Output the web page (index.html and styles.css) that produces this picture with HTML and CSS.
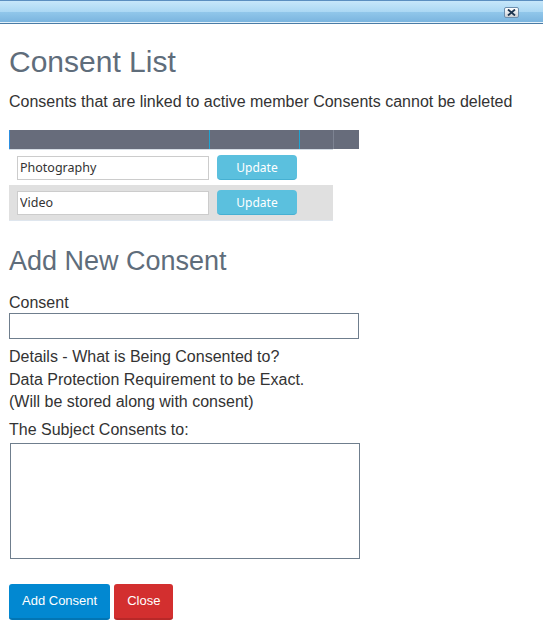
FILE: index.html
```html
<!DOCTYPE html>
<html>
<head>
<meta charset="utf-8">
<title>Consent List</title>
<link rel="stylesheet" href="styles.css">
</head>
<body>
<div class="titlebar">
  <button class="tb-close" type="button" aria-label="Close">
    <svg width="9" height="7" viewBox="0 0 9 7"><path d="M1 0.5 L8 6.5 M8 0.5 L1 6.5" stroke="#1d3550" stroke-width="1.8" fill="none"/></svg>
  </button>
</div>
<div class="content">
  <h2 class="h-main">Consent List</h2>
  <p class="note">Consents that are linked to active member Consents cannot be deleted</p>

  <div class="grid">
    <div class="grid-head">
      <div class="hc hc1"></div>
      <div class="hc hc2"></div>
      <div class="hc hc3"></div>
      <div class="hc hc4"></div>
    </div>
    <div class="grid-row first">
      <div class="gc gc1"><input class="row-input" type="text" value="Photography"></div>
      <div class="gc gc2"><button class="btn-update" type="button">Update</button></div>
      <div class="gc gc3"></div>
    </div>
    <div class="grid-row alt">
      <div class="gc gc1"><input class="row-input" type="text" value="Video"></div>
      <div class="gc gc2"><button class="btn-update" type="button">Update</button></div>
      <div class="gc gc3"></div>
    </div>
  </div>

  <h3 class="h-sub">Add New Consent</h3>
  <label class="lbl">Consent</label>
  <input class="field" type="text">
  <div class="details">Details - What is Being Consented to?<br>Data Protection Requirement to be Exact.<br>(Will be stored along with consent)</div>
  <label class="lbl lbl2">The Subject Consents to:</label>
  <textarea class="area"></textarea>
  <div class="actions">
    <button class="btn btn-primary" type="button">Add Consent</button>
    <button class="btn btn-danger" type="button">Close</button>
  </div>
</div>
</body>
</html>
```
FILE: styles.css
```css
html, body {
  margin: 0;
  padding: 0;
  background: #fff;
}
body {
  font-family: "Liberation Sans", Arial, sans-serif;
  color: #333;
  width: 543px;
}
.titlebar {
  height: 21px;
  border-top: 1px solid #5b8fc0;
  border-bottom: 1px solid #4a7ca6;
  box-shadow: inset 0 -1px 0 #e4f2fb;
  background: linear-gradient(#c6e7fa 0%, #acd8f4 48%, #90c6ea 52%, #79b3de 100%);
  display: flex;
  justify-content: flex-end;
  align-items: flex-start;
  padding: 0 24px 1px 0;
}
.tb-close {
  margin-top: 6px;
  width: 15px;
  height: 11px;
  padding: 0;
  border: 1px solid #6d8fae;
  border-radius: 2px;
  background: linear-gradient(#ffffff, #e4e8ec 50%, #c9ced4);
  display: flex;
  align-items: center;
  justify-content: center;
}
.content {
  padding: 0 9px;
}
.h-main {
  font-size: 30px;
  font-weight: normal;
  line-height: 33px;
  color: #5f6d7b;
  margin: 21px 0 12px;
}
.note {
  font-size: 16px;
  line-height: 23px;
  margin: 0 0 17px;
}
.grid {
  width: 350px;
}
.grid-head {
  display: grid;
  grid-template-columns: 200px 90px 34px 26px;
  width: 350px;
  height: 19px;
  background: #676c7b;
}
.hc { height: 19px; }
.hc1 { border-left: 1px solid #2c8ee0; }
.hc2 { border-left: 1px solid #1fa4d2; }
.hc3 { border-left: 1px solid #1fa4d2; }
.hc4 { border-left: 1px solid #7d8392; }
.grid-row {
  display: grid;
  grid-template-columns: 200px 90px 34px;
  width: 324px;
  height: 35px;
  align-items: center;
}
.grid-row.first {
  border-top: 1px solid #d5dce4;
}
.grid-row.alt {
  background: #e0e0e0;
  border-bottom: 1px solid #dfe6ee;
}
.gc1 { padding-left: 8px; }
.gc2 { padding-left: 8px; }
.row-input {
  box-sizing: border-box;
  width: 192px;
  height: 24px;
  border: 1px solid #cccccc;
  background: #fff;
  font-family: "Noto Sans", sans-serif;
  font-size: 12.5px;
  color: #333;
  padding: 0 2px;
  margin: 0;
  display: block;
}
.btn-update {
  box-sizing: border-box;
  width: 80px;
  height: 25px;
  border: 0;
  border-bottom: 1px solid #46b0d2;
  border-radius: 4px;
  background: #5bc0de;
  color: #fff;
  font-family: "Noto Sans", sans-serif;
  font-size: 12px;
  padding: 0;
  display: block;
}
.h-sub {
  font-size: 27px;
  font-weight: normal;
  line-height: 33px;
  color: #5f6d7b;
  margin: 24px 0 15px;
}
.lbl {
  display: block;
  font-size: 16px;
  line-height: 20px;
}
.field {
  box-sizing: border-box;
  display: block;
  width: 350px;
  height: 26px;
  margin: 0;
  border: 1px solid #6f7e8d;
  background: #fff;
}
.details {
  font-size: 16px;
  line-height: 22.5px;
  margin-top: 7px;
}
.lbl2 {
  margin-top: 5px;
  line-height: 22px;
  margin-bottom: 2px;
}
.area {
  box-sizing: border-box;
  display: block;
  width: 350px;
  height: 116px;
  margin: 0 0 0 1px;
  border: 1px solid #6f7e8d;
  resize: none;
  background: #fff;
}
.actions {
  margin-top: 25px;
  display: flex;
  gap: 4px;
}
.btn {
  box-sizing: border-box;
  height: 36px;
  padding: 0 13px;
  border: 0;
  border-radius: 3px;
  color: #fff;
  font-family: "Liberation Sans", Arial, sans-serif;
  font-size: 13px;
}
.btn-primary {
  background: #0288d1;
  border-bottom: 2px solid #0275b4;
}
.btn-danger {
  background: #d32f2f;
  border-bottom: 2px solid #b82828;
}
```
